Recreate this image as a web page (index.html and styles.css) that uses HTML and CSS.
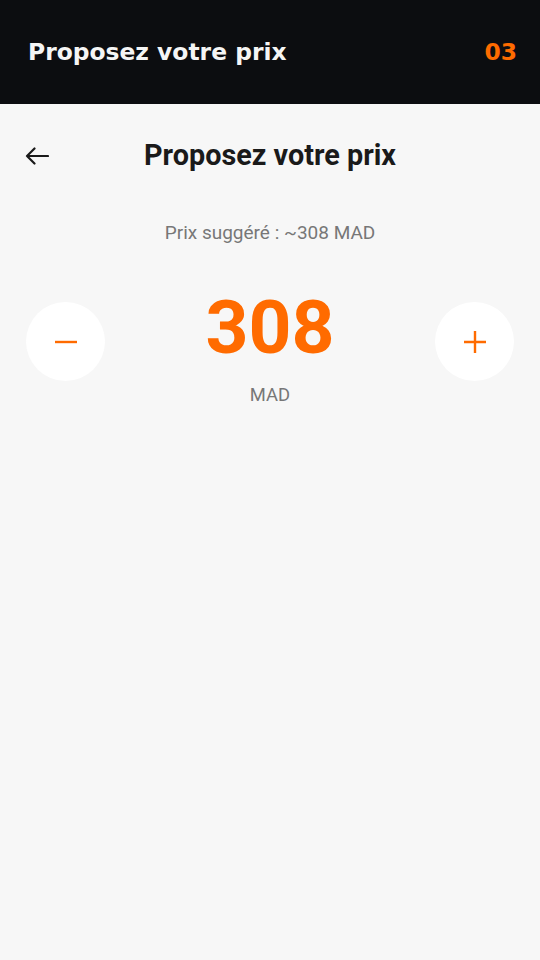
FILE: index.html
```html
<!DOCTYPE html>
<html lang="fr">
<head>
    <title>Proposez votre prix</title>
    <link rel="stylesheet" href="styles.css">
</head>
<body>
    <header class="topbar">
        <h1>Proposez votre prix</h1>
        <span class="step">03</span>
    </header>

    <div class="screen">
        <div class="nav">
            <button class="back" aria-label="Retour">
                <svg width="24" height="24" viewBox="0 0 24 24"><path d="M23 12H2M9.5 4.5L2 12l7.5 7.5" fill="none" stroke="#1a1a1a" stroke-width="2.2" stroke-linecap="round" stroke-linejoin="round"/></svg>
            </button>
            <h2>Proposez votre prix</h2>
        </div>

        <p class="hint">Prix suggéré : ~308 MAD</p>

        <div class="price-row">
            <button class="round" aria-label="Moins">
                <svg width="24" height="24" viewBox="0 0 24 24"><path d="M1 12h22" stroke="#ff6b00" stroke-width="2.4"/></svg>
            </button>
            <div class="price">
                <div class="amount">308</div>
                <div class="currency">MAD</div>
            </div>
            <button class="round" aria-label="Plus">
                <svg width="24" height="24" viewBox="0 0 24 24"><path d="M1 12h22M12 1v22" stroke="#ff6b00" stroke-width="2.4"/></svg>
            </button>
        </div>
    </div>
</body>
</html>
```

FILE: styles.css
```css
body {
    margin: 0;
    padding: 0;
    background-color: #f7f7f7;
    font-family: Roboto, "Noto Sans", sans-serif;
    width: 540px;
    height: 960px;
    overflow: hidden;
}

.topbar {
    height: 104px;
    background-color: #0c0d10;
    display: flex;
    align-items: center;
    justify-content: space-between;
    padding: 0 23px 0 28px;
    box-sizing: border-box;
}

.topbar h1 {
    margin: 0;
    font-family: "DejaVu Sans", sans-serif;
    font-size: 23.4px;
    font-weight: bold;
    color: #f5f5f5;
}

.topbar .step {
    font-family: "DejaVu Sans", sans-serif;
    font-size: 23.4px;
    font-weight: bold;
    color: #ff6b00;
}

.nav {
    position: relative;
    height: 102px;
    display: flex;
    align-items: center;
    justify-content: center;
}

.nav h2 {
    margin: 0;
    font-size: 28.8px;
    font-weight: bold;
    color: #1a1a1a;
}

.back {
    position: absolute;
    left: 24px;
    top: 39px;
    border: none;
    background: none;
    padding: 0;
    width: 26px;
    height: 26px;
    display: flex;
    align-items: center;
    justify-content: center;
}

.hint {
    margin: 15px 0 0;
    text-align: center;
    font-size: 19px;
    color: #777;
}

.price-row {
    display: flex;
    align-items: flex-start;
    justify-content: space-between;
    padding: 0 26px;
    margin-top: 26px;
}

.round {
    width: 79px;
    height: 79px;
    border-radius: 50%;
    border: none;
    background-color: #fff;
    padding: 0;
    display: flex;
    align-items: center;
    justify-content: center;
    margin-top: 32px;
}

.price {
    text-align: center;
}

.amount {
    font-size: 75px;
    font-weight: bold;
    color: #ff6b00;
    line-height: 1;
    margin-top: 20px;
}

.currency {
    font-size: 18.4px;
    color: #777;
    margin-top: 19px;
}
```
